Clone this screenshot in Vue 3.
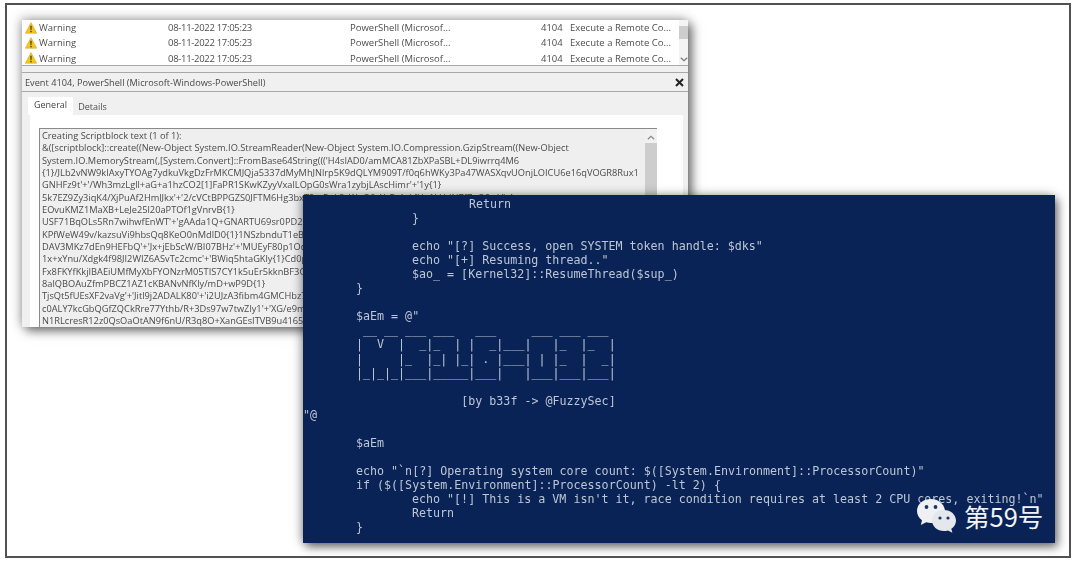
<script setup>
const rows = [1, 2, 3]
const boxLines = [
  'Creating Scriptblock text (1 of 1):',
  "&([scriptblock]::create((New-Object System.IO.StreamReader(New-Object System.IO.Compression.GzipStream((New-Object",
  "System.IO.MemoryStream(,[System.Convert]::FromBase64String((('H4sIAD0/amMCA81ZbXPaSBL+DL9iwrrq4M6",
  "{1}/JLb2vNW9kIAxyTYOAg7ydkuVkgDzFrMKCMJQja5337dMyMhJNlrp5K9dQLYM909T/f0q6hWKy3Pa47WASXqvUOnjLOICU6e16qVOGR8Rux1",
  "GNHFz9t'+'/Wh3mzLgll+aG+a1hzCO2[1]FaPR1SKwKZyyVxalLOpG0sWra1zybjLAscHimr'+'1y{1}",
  "5k7EZ9Zy3iqK4/XjPuAf2HmlJkx'+'2/cVCtBPPGZS0JFTM6Hg3bxT2mPqL8vWnQ0sYcRt4aLfUe1kHdN7fZpQ2wVbA",
  "EOvuKMZ1MaXB+LeJe25l20aPTOf1gVnrvB{1}",
  "USF71BqOLs5Rn7wihwfEnWT'+'gAAda1Q+GNARTU69sr0PD20xK4mVbTcYf1eRt8LqPnWz3sHd",
  "KPfWeW49v/kazsuVi9hbsQq8KeO0nMdlD0{1}1NSzbnduT1eBBkQf7cV2mXaLpT9sRw4nHyZ",
  "DAV3MKz7dEn9HEFbQ'+'Jx+jEbScW/BI07BHz'+'MUEyF80p1OqT5mGvR3kLzWd8nYxC2",
  "1x+xYnu/Xdgk4f98JI2WIZ6ASvTc2cmc'+'BWiq5htaGKly{1}Cd0pRf7mTsVxE3nK",
  "Fx8FKYfKkjIBAEiUMfMyXbFYONzrM05TIS7CY1k5uEr5kknBF3CqWm8ZpLd2TyHv",
  "8alQBOAuZfmPBCZ1AZ1cKBANvNfKly/mD+wP9D{1}",
  "TjsQt5fUEsXF2vaVg'+'Jitl9j2ADALK80'+'i2UJzA3fibm4GMCHbz7pWqRkT1xN",
  "c0ALY7kcGbQGfZQCkRre77Ythb/R+3Ds97w7twZly1'+'XG/e9mF2pQcK8sLtVd",
  "N1RLcresR12z0QsOaOtAN9f6nU/R3q8O+XanGEsITVB9u4165FmWq3TzKpC7dN",
]
const termLines = [
  [3, 'Return'], [2, '}'], [0, ''],
  [2, 'echo "[?] Success, open SYSTEM token handle: $dks"'],
  [2, 'echo "[+] Resuming thread.."'],
  [2, '$ao_ = [Kernel32]::ResumeThread($sup_)'],
  [1, '}'], [0, ''],
  [1, '$aEm = @"'],
  [1, ' __ __ ___ ___   ___     ___ ___ ___ '],
  [1, '|  V  |  _|_  | |  _|___|   |_  |_  |'],
  [1, '|     |_  |_| |_| . |___| | |_  |  _|'],
  [1, '|_|_|_|___|_____|___|   |___|___|___|'],
  [0, ''],
  [1, '               [by b33f -> @FuzzySec]'],
  [0, '"@'], [0, ''],
  [1, '$aEm'], [0, ''],
  [1, 'echo "`n[?] Operating system core count: $([System.Environment]::ProcessorCount)"'],
  [1, 'if ($([System.Environment]::ProcessorCount) -lt 2) {'],
  [2, `echo "[!] This is a VM isn't it, race condition requires at least 2 CPU cores, exiting!\`n"`],
  [2, 'Return'],
  [1, '}'],
]
</script>

<template>
  <main class="frame">
    <section class="viewer">
      <div class="list">
        <div class="rows">
          <div v-for="r in rows" :key="r" class="row">
            <span class="level">
              <svg width="12" height="12" viewBox="0 0 12 12">
                <path d="M6 .6 11.7 11.300H.3Z" fill="#f5c518" stroke="#c9a227" stroke-width=".5" />
                <path d="M5.400 3.800h1.200l-.2 4.400h-.8ZM5.400 9h1.200v1.200H5.400Z" fill="#222" />
              </svg>
              Warning
            </span>
            <span class="date">08-11-2022 17:05:23</span>
            <span>PowerShell (Microsof...</span>
            <span>4104</span>
            <span>Execute a Remote Co...</span>
          </div>
        </div>
        <div class="list-scroll">
          <i class="list-thumb"></i>
          <svg class="list-chevron" width="8" height="5" viewBox="0 0 8 5">
            <path d="M.8.8 4 3.800 7.200.8" fill="none" stroke="#777" stroke-width="1.2" />
          </svg>
        </div>
      </div>
      <header class="title">
        <span>Event 4104, PowerShell (Microsoft-Windows-PowerShell)</span>
        <svg class="close" width="9" height="9" viewBox="0 0 9 9">
          <path d="M1 1 8 8M8 1 1 8" stroke="#222" stroke-width="2" />
        </svg>
      </header>
      <div class="tabs">
        <span class="tab active">General</span>
        <span class="tab">Details</span>
      </div>
      <div class="panel">
        <div class="box">
          <div class="box-text">
            <div v-for="(line, i) in boxLines" :key="i" class="box-line">{{ line }}</div>
          </div>
          <div class="box-scroll">
            <svg width="8" height="5" viewBox="0 0 8 5">
              <path d="M.8 4.200 4 1.200 7.200 4.200" fill="none" stroke="#888" stroke-width="1.2" />
            </svg>
            <i class="box-thumb"></i>
          </div>
        </div>
      </div>
    </section>

    <section class="terminal">
      <div v-for="(line, i) in termLines" :key="i" class="term-line" :class="'indent' + line[0]">{{ line[1] }}</div>
    </section>

    <div class="mark">
      <svg width="41" height="36" viewBox="0 0 41 36">
        <path d="M15 1C7 1 1 6.200 1 13c0 3.800 2 7 5 9.300L4.800 27l5.400-2.700c1.600.5 3.200.7 4.800.7 1 0 1.800-.1 2.600-.2C23 21 27 15 29 12.600 28.300 6 22.300 1 15 1Z" fill="#eef0f3" />
        <circle cx="10.500" cy="9" r="1.900" fill="#1d3564" />
        <circle cx="19.500" cy="9" r="1.900" fill="#1d3564" />
        <path d="M28 12c-6.800 0-12 4.700-12 10.500S21.200 33 28 33c1.400 0 2.700-.2 4-.6l4.400 2.400-1.100-4C38.200 28.900 40 25.900 40 22.500 40 16.700 34.800 12 28 12Z" fill="#e4e7ec" />
        <circle cx="24" cy="20" r="1.600" fill="#1d3564" />
        <circle cx="32" cy="20" r="1.600" fill="#1d3564" />
      </svg>
      <span class="mark-text">第59号</span>
    </div>
  </main>
</template>

<style>
body { background: #fff; overflow: hidden; }
</style>

<style scoped>
.frame {
  position: relative;
  width: 1080px;
  height: 564px;
  background: #fff;
  overflow: hidden;
}
.frame::before {
  content: "";
  position: absolute;
  left: 5px;
  top: 3px;
  width: 1066px;
  height: 555px;
  border: 2px solid #525252;
  box-sizing: border-box;
}
.viewer {
  position: absolute;
  left: 22px;
  top: 20px;
  width: 666px;
  height: 307px;
  display: flex;
  flex-direction: column;
  background: #f0f0f0;
  box-shadow: 4px 4px 10px rgba(0, 0, 0, .55), -2px -2px 10px rgba(0, 0, 0, .25);
  font: 9.500px "Open Sans", "Noto Sans", sans-serif;
  color: #4d4d4d;
  overflow: hidden;
}
.list {
  display: flex;
  height: 45px;
  background: #fff;
  border-bottom: 1px solid #a8a8a8;
}
.rows { flex: 1; filter: blur(.5px); }
.row {
  display: grid;
  grid-template-columns: 143px 182px 191px 29px 1fr;
  align-items: center;
  height: 15.300px;
  padding-left: 3px;
  white-space: nowrap;
}
.date { letter-spacing: -.3px; }
.level { display: flex; align-items: center; gap: 2px; }
.list-scroll {
  width: 9px;
  display: flex;
  flex-direction: column;
  align-items: center;
  background: #f4f4f4;
}
.list-thumb { width: 100%; height: 13px; margin-top: 6px; background: #cdcdcd; }
.list-chevron { margin-top: 18px; }
.title {
  display: flex;
  align-items: center;
  justify-content: space-between;
  height: 18px;
  margin-top: 6px;
  padding: 0 4px 0 3px;
  border-top: 1px solid #a8a8a8;
  border-bottom: 1px solid #a8a8a8;
  font-size: 9.200px;
  color: #484848;
}
.title span { filter: blur(.5px); }
.close { filter: blur(.3px); }
.tabs {
  display: flex;
  height: 18px;
  margin-top: 5px;
  padding-left: 6px;
}
.tab {
  display: flex;
  align-items: center;
  padding: 0 5px;
  filter: blur(.5px);
  font-size: 9px;
}
.tab.active {
  background: #fff;
  padding: 0 6px 4px 6px;
  color: #444;
}
.panel {
  flex: 1;
  min-height: 0;
  margin: 0 5px 0 8px;
  padding: 13px 26px 0 9px;
  background: #fff;
}
.box {
  display: flex;
  height: 100%;
  background: #efefef;
  border-top: 1px solid #8a8a8a;
  border-left: 1px solid #8a8a8a;
  box-sizing: border-box;
}
.box-text {
  flex: 1;
  min-width: 0;
  overflow: hidden;
  padding: 1px 0 0 2px;
  filter: blur(.5px);
  font-size: 9.250px;
  line-height: 12.330px;
  color: #4a4a4a;
}
.box-line { white-space: nowrap; }
.box-scroll {
  width: 12px;
  display: flex;
  flex-direction: column;
  align-items: center;
  padding-top: 6px;
  background: #f1f1f1;
}
.box-thumb { flex: 1; width: 100%; margin-top: 3px; background: #cdcdcd; }
.terminal {
  position: absolute;
  left: 303px;
  top: 195px;
  width: 752px;
  height: 348px;
  box-sizing: border-box;
  padding-top: 2px;
  background: #0a2356;
  box-shadow: 3px 4px 9px rgba(0, 0, 0, .55), -3px -1px 9px rgba(0, 0, 0, .25);
  font: 11.670px/14.050px "DejaVu Sans Mono", "Liberation Mono", monospace;
  color: #bcc6d4;
  white-space: pre;
}
.term-line { height: 14.050px; filter: blur(.5px); }
.indent0 { padding-left: 0; }
.indent1 { padding-left: 53px; }
.indent2 { padding-left: 109px; }
.indent3 { padding-left: 166px; }
.mark {
  position: absolute;
  left: 916px;
  top: 497px;
  display: flex;
  align-items: center;
  gap: 7px;
  height: 37px;
}
.mark-text {
  font: 25.500px/1 "Noto Sans CJK SC", "Noto Sans", sans-serif;
  color: #f2f3f5;
}
</style>
